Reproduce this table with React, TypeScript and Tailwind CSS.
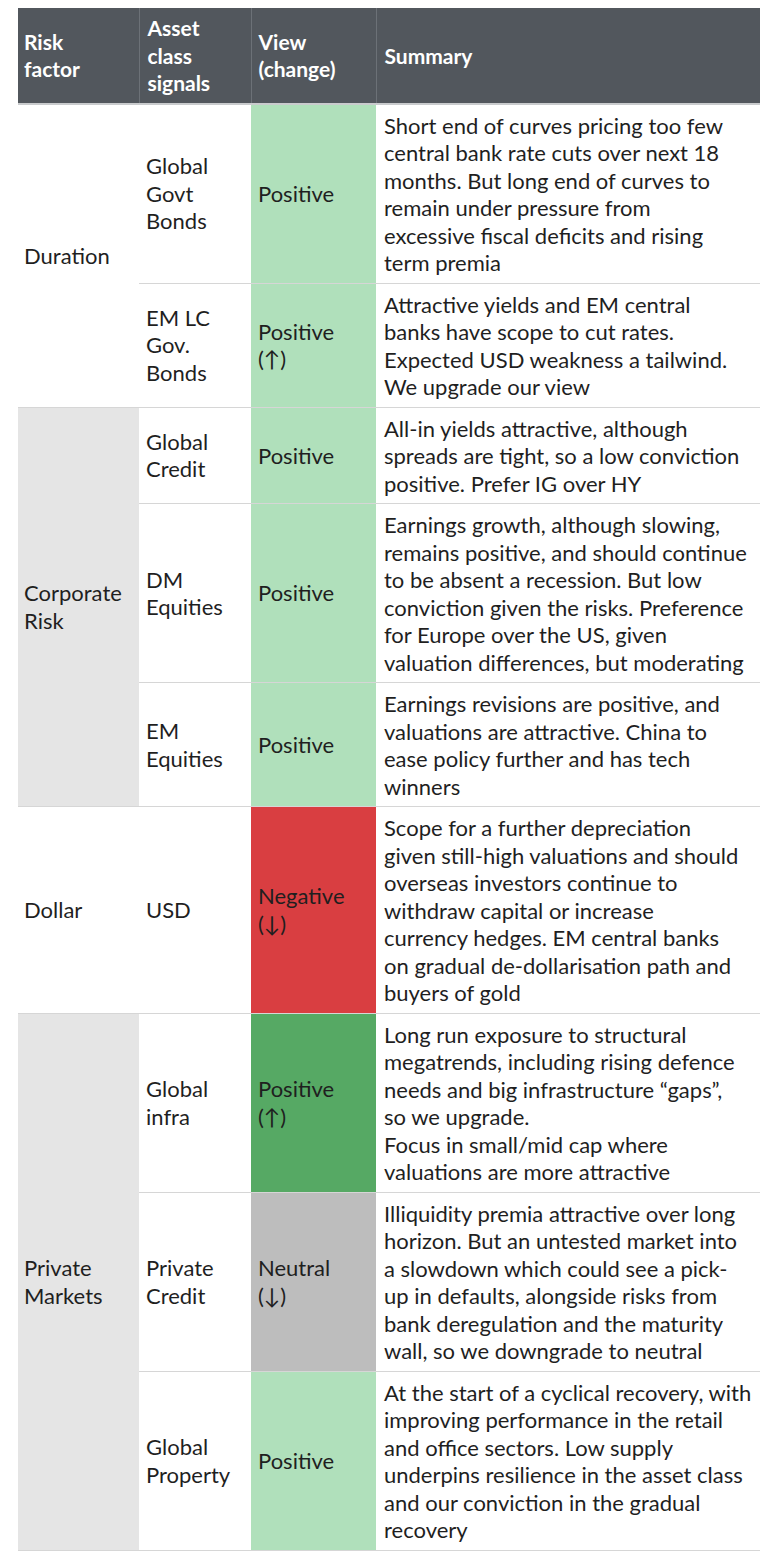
import React from 'react';

type Row = {
  group?: { label: string[]; span: number; shaded: boolean };
  asset: string[];
  view: string[];
  tone: 'light' | 'red' | 'green' | 'neutral';
  summary: string[];
};

const rows: Row[] = [
  {
    group: { label: ['Duration'], span: 2, shaded: false },
    asset: ['Global', 'Govt', 'Bonds'],
    view: ['Positive'],
    tone: 'light',
    summary: [
      'Short end of curves pricing too few',
      'central bank rate cuts over next 18',
      'months. But long end of curves to',
      'remain under pressure from',
      'excessive fiscal deficits and rising',
      'term premia',
    ],
  },
  {
    asset: ['EM LC', 'Gov.', 'Bonds'],
    view: ['Positive', '(↑)'],
    tone: 'light',
    summary: [
      'Attractive yields and EM central',
      'banks have scope to cut rates.',
      'Expected USD weakness a tailwind.',
      'We upgrade our view',
    ],
  },
  {
    group: { label: ['Corporate', 'Risk'], span: 3, shaded: true },
    asset: ['Global', 'Credit'],
    view: ['Positive'],
    tone: 'light',
    summary: [
      'All-in yields attractive, although',
      'spreads are tight, so a low conviction',
      'positive. Prefer IG over HY',
    ],
  },
  {
    asset: ['DM', 'Equities'],
    view: ['Positive'],
    tone: 'light',
    summary: [
      'Earnings growth, although slowing,',
      'remains positive, and should continue',
      'to be absent a recession. But low',
      'conviction given the risks. Preference',
      'for Europe over the US, given',
      'valuation differences, but moderating',
    ],
  },
  {
    asset: ['EM', 'Equities'],
    view: ['Positive'],
    tone: 'light',
    summary: [
      'Earnings revisions are positive, and',
      'valuations are attractive. China to',
      'ease policy further and has tech',
      'winners',
    ],
  },
  {
    group: { label: ['Dollar'], span: 1, shaded: false },
    asset: ['USD'],
    view: ['Negative', '(↓)'],
    tone: 'red',
    summary: [
      'Scope for a further depreciation',
      'given still-high valuations and should',
      'overseas investors continue to',
      'withdraw capital or increase',
      'currency hedges. EM central banks',
      'on gradual de-dollarisation path and',
      'buyers of gold',
    ],
  },
  {
    group: { label: ['Private', 'Markets'], span: 3, shaded: true },
    asset: ['Global', 'infra'],
    view: ['Positive', '(↑)'],
    tone: 'green',
    summary: [
      'Long run exposure to structural',
      'megatrends, including rising defence',
      'needs and big infrastructure “gaps”,',
      'so we upgrade.',
      'Focus in small/mid cap where',
      'valuations are more attractive',
    ],
  },
  {
    asset: ['Private', 'Credit'],
    view: ['Neutral', '(↓)'],
    tone: 'neutral',
    summary: [
      'Illiquidity premia attractive over long',
      'horizon. But an untested market into',
      'a slowdown which could see a pick-',
      'up in defaults, alongside risks from',
      'bank deregulation and the maturity',
      'wall, so we downgrade to neutral',
    ],
  },
  {
    asset: ['Global', 'Property'],
    view: ['Positive'],
    tone: 'light',
    summary: [
      'At the start of a cyclical recovery, with',
      'improving performance in the retail',
      'and office sectors. Low supply',
      'underpins resilience in the asset class',
      'and our conviction in the gradual',
      'recovery',
    ],
  },
];

const toneClass = {
  light: 'bg-[#b0e0bb]',
  red: 'bg-[#d93e41]',
  green: 'bg-[#56a964]',
  neutral: 'bg-[#bdbdbd]',
};

function Lines({ lines }: { lines: string[] }) {
  return (
    <>
      {lines.map((line, i) => (
        <span key={i} className="block whitespace-nowrap">
          {line}
        </span>
      ))}
    </>
  );
}

export default function App() {
  return (
    <div className="min-h-[1562px] bg-white pl-[18px] pt-[8px] font-['Lato',sans-serif] text-[22px] leading-[27.5px] text-[#1f1f1f]">
      <table className="w-[742px] table-fixed border-collapse">
        <colgroup>
          <col className="w-[121px]" />
          <col className="w-[112px]" />
          <col className="w-[125px]" />
          <col className="w-[384px]" />
        </colgroup>
        <thead>
          <tr className="border-b-2 border-[#c9cbcd] bg-[#52575d] text-left align-middle text-[21px] font-bold text-white">
            <th className="py-[6px] pl-[6px]">
              <Lines lines={['Risk', 'factor']} />
            </th>
            <th className="border-l border-[#6c7177] py-[6px] pl-[8px]">
              <Lines lines={['Asset', 'class', 'signals']} />
            </th>
            <th className="border-l border-[#6c7177] py-[6px] pl-[7px]">
              <Lines lines={['View', '(change)']} />
            </th>
            <th className="border-l border-[#6c7177] py-[6px] pl-[8px]">Summary</th>
          </tr>
        </thead>
        <tbody>
          {rows.map((row, i) => (
            <tr key={i} className="border-b border-[#d6d6d6] align-middle">
              {row.group && (
                <td
                  rowSpan={row.group.span}
                  className={`border-b border-[#d6d6d6] pl-[6px] ${row.group.shaded ? 'bg-[#e5e5e5]' : 'bg-white'}`}
                >
                  <Lines lines={row.group.label} />
                </td>
              )}
              <td className="pl-[7px]">
                <Lines lines={row.asset} />
              </td>
              <td className={`pl-[7px] ${toneClass[row.tone]}`}>
                <Lines lines={row.view} />
              </td>
              <td className="pt-[7px] pb-[6px] pl-[8px]">
                <Lines lines={row.summary} />
              </td>
            </tr>
          ))}
        </tbody>
      </table>
    </div>
  );
}
